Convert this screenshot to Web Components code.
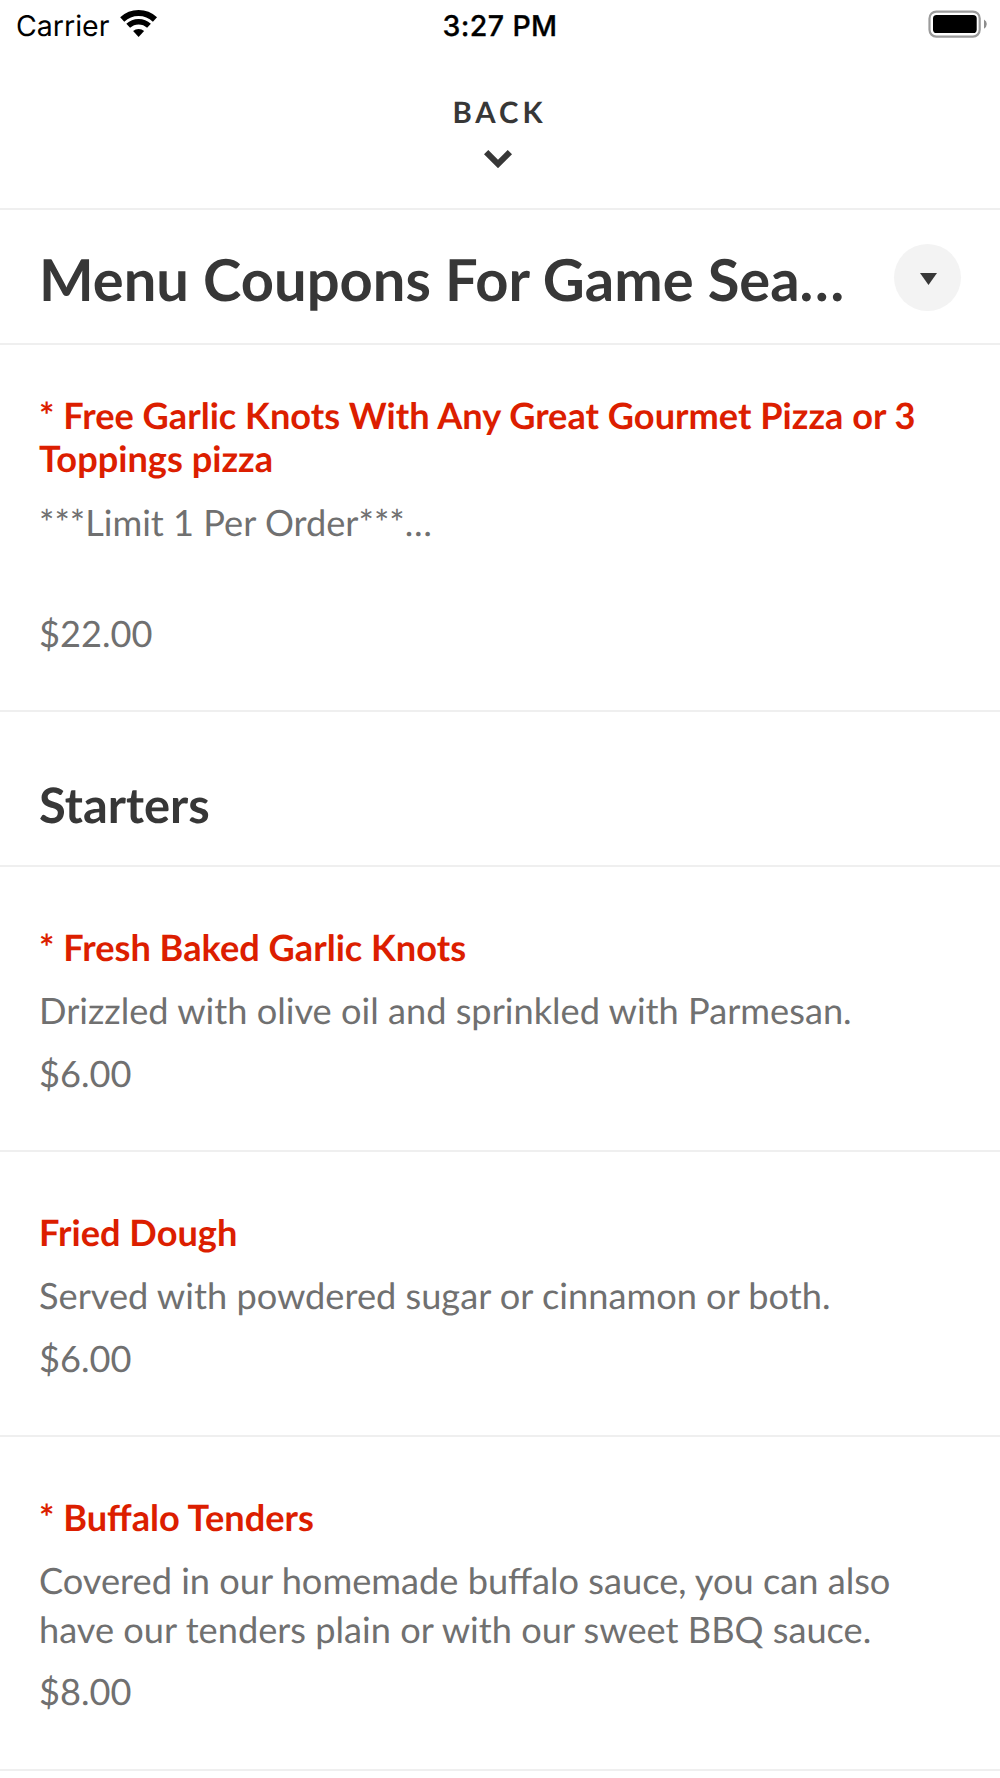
<!DOCTYPE html>
<html lang="en">
<head>
<meta charset="utf-8">
<title>Menu</title>
<style>
html,body{margin:0;padding:0;background:#fff}
body{width:1000px;height:1778px;overflow:hidden;font-family:Lato,sans-serif;color:#373737;text-rendering:geometricPrecision}
</style>
</head>
<body>
<menu-screen></menu-screen>
<script>
const define = (name, html) => customElements.define(name, class extends HTMLElement {
  constructor() {
    super();
    const t = document.createElement('template');
    t.innerHTML = html;
    this.attachShadow({ mode: 'open' }).appendChild(t.content.cloneNode(true));
  }
});

define('status-bar', `
<style>
:host{display:grid;grid-template-columns:1fr auto 1fr;align-items:center;height:50px;padding:0 12px 0 16px;box-sizing:border-box;font-family:Inter,sans-serif;font-size:28.5px;line-height:48px;color:#000}
.left{display:flex;align-items:center}
.carrier{letter-spacing:0;width:104px;white-space:nowrap;padding-top:2px}
.time{font-weight:500;-webkit-text-stroke:.3px #000;letter-spacing:.4px;white-space:nowrap;padding:2px 4px 0 0}
.battery{justify-self:end}
svg{display:block}
</style>
<div class="left"><span class="carrier">Carrier</span>
<svg width="38" height="50" viewBox="0 0 38 50"><g fill="none" stroke="#000"><path d="M2.23 19.45a24 24 0 0 1 32.74 0" stroke-width="6"/><path d="M8.2 25.85a15.25 15.25 0 0 1 20.8 0" stroke-width="5.5"/></g><path d="M13.1 31.1a8 8 0 0 1 11 0L18.6 37z"/></svg></div>
<span class="time">3:27 PM</span>
<svg class="battery" width="60" height="50" viewBox="0 0 60 50"><rect x="1.5" y="11.6" width="50.2" height="25" rx="6.8" fill="#fff" stroke="#9b9b9b" stroke-width="2.2"/><rect x="5" y="15" width="43.7" height="18" rx="3.6"/><path d="M56 19.5q2.8 1.6 2.8 4.5T56 28.7z" fill="#8d8d8d"/></svg>
`);

define('back-bar', `
<style>
:host{display:flex;flex-direction:column;align-items:center;height:158px;border-bottom:2px solid #efefef;color:#373737}
.label{font-size:29.33px;font-weight:700;line-height:36px;letter-spacing:4px;padding:44.5px 1px 0 0}
svg{display:block;margin:19.5px 4px 0 0}
</style>
<div class="label"><slot></slot></div>
<svg width="28" height="18" viewBox="0 0 28 18"><path d="M0 4.2L4.3 0 14 9.8 23.7 0 28 4.2 14 18.2z" fill="#373737"/></svg>
`);

define('section-header', `
<style>
:host{display:flex;align-items:center;justify-content:space-between;height:133px;padding:0 39px;border-bottom:2px solid #efefef}
h1{margin:6px 0 0;font-size:57.9px;line-height:72px;font-weight:700;color:#373737;white-space:nowrap}
.toggle{display:flex;align-items:center;justify-content:center;margin-top:2px;width:67.5px;height:67.5px;border-radius:50%;background:#f3f3f3}
.toggle svg{margin:2px 0 0 2px}
</style>
<h1><slot></slot></h1>
<div class="toggle"><svg width="17" height="12" viewBox="0 0 17 12"><path d="M0 0h17L8.5 12z" fill="#373737"/></svg></div>
`);

define('menu-category', `
<style>
:host{display:block;box-sizing:border-box;height:154.8px;padding:64.3px 39px 0;border-bottom:2px solid #efefef}
h2{margin:0;font-size:48.9px;line-height:57.6px;font-weight:700;color:#373737}
</style>
<h2><slot></slot></h2>
`);

define('menu-item', `
<style>
:host{display:flex;flex-direction:column;padding:var(--item-top,58.6px) 40px 53px 39px;border-bottom:2px solid #efefef;font-size:36.2px;line-height:48.53px;color:#707070}
.name{font-weight:700;line-height:43.67px;color:#dc1e00}
.text{margin-top:16.9px}
.price{margin-top:13.8px}
</style>
<div class="name"><slot name="name"></slot></div>
<div class="text"><slot></slot></div>
<div class="price"><slot name="price"></slot></div>
`);

define('menu-screen', `
<style>
:host{display:flex;flex-direction:column;width:1000px;height:1778px;overflow:hidden;background:#fff}
:host>*{flex-shrink:0}
.coupon{--item-top:48.6px}
</style>
<status-bar></status-bar>
<back-bar>BACK</back-bar>
<section-header>Menu Coupons For Game Sea…</section-header>
<menu-item class="coupon"><span slot="name">* Free Garlic Knots With Any Great Gourmet Pizza or 3 Toppings pizza</span>***Limit 1 Per Order***…<br><br><span slot="price">$22.00</span></menu-item>
<menu-category>Starters</menu-category>
<menu-item><span slot="name">* Fresh Baked Garlic Knots</span>Drizzled with olive oil and sprinkled with Parmesan.<span slot="price">$6.00</span></menu-item>
<menu-item><span slot="name">Fried Dough</span>Served with powdered sugar or cinnamon or both.<span slot="price">$6.00</span></menu-item>
<menu-item><span slot="name">* Buffalo Tenders</span>Covered in our homemade buffalo sauce, you can also have our tenders plain or with our sweet BBQ sauce.<span slot="price">$8.00</span></menu-item>
`);
</script>
</body>
</html>
